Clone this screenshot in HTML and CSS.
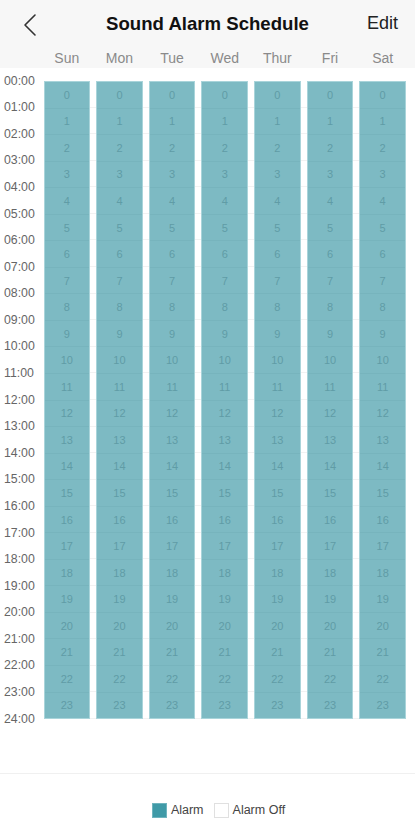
FILE: index.html
```html
<!DOCTYPE html>
<html>
<head>
<meta charset="utf-8">
<link rel="stylesheet" href="styles.css">
</head>
<body>
<div class="page">
  <header class="header">
    <div class="topbar">
      <div class="back">
        <svg width="14" height="24" viewBox="0 0 14 24"><path d="M12 2 L2 12 L12 22" fill="none" stroke="#333" stroke-width="1.6" stroke-linecap="round" stroke-linejoin="round"/></svg>
      </div>
      <div class="title">Sound Alarm Schedule</div>
      <div class="edit">Edit</div>
    </div>
    <div class="days">
      <span>Sun</span><span>Mon</span><span>Tue</span><span>Wed</span><span>Thur</span><span>Fri</span><span>Sat</span>
    </div>
  </header>
  <main class="schedule">
    <div class="times" id="times"></div>
    <div class="grid" id="grid"></div>
  </main>
  <footer class="legend">
    <span class="swatch on"></span><span class="lbl">Alarm</span>
    <span class="swatch off"></span><span class="lbl">Alarm Off</span>
  </footer>
</div>
<script src="app.js"></script>
</body>
</html>
```
FILE: app.js
```js
var times = document.getElementById('times');
for (var h = 0; h <= 24; h++) {
  var d = document.createElement('div');
  d.className = 'time';
  d.textContent = (h < 10 ? '0' + h : h) + ':00';
  times.appendChild(d);
}
var grid = document.getElementById('grid');
for (var c = 0; c < 7; c++) {
  var col = document.createElement('div');
  col.className = 'col';
  for (var r = 0; r < 24; r++) {
    var cell = document.createElement('div');
    cell.className = 'cell';
    cell.textContent = r;
    col.appendChild(cell);
  }
  grid.appendChild(col);
}
```
FILE: styles.css
```css
html, body {
  margin: 0;
  padding: 0;
  background: #fff;
}
body {
  font-family: "Liberation Sans", Arial, sans-serif;
  width: 415px;
  height: 840px;
  overflow: hidden;
}
.page {
  display: flex;
  flex-direction: column;
  height: 840px;
}
.header {
  background: #f7f7f7;
  height: 68px;
  display: flex;
  flex-direction: column;
}
.topbar {
  height: 47px;
  display: flex;
  align-items: center;
}
.back {
  width: 62px;
  padding-left: 23px;
  box-sizing: border-box;
  display: flex;
  align-items: center;
  padding-top: 2px;
}
.title {
  flex: 1;
  text-align: center;
  font-weight: bold;
  font-size: 18.6px;
  color: #111;
}
.edit {
  width: 62px;
  font-size: 18px;
  color: #222;
  padding-left: 14px;
  box-sizing: border-box;
}
.days {
  display: flex;
  gap: 6px;
  padding-left: 43.5px;
  padding-right: 9px;
  height: 21px;
  align-items: center;
}
.days span {
  flex: 1;
  text-align: center;
  font-size: 14px;
  color: #8a8a8a;
}
.schedule {
  display: flex;
  margin-top: 13px;
  height: 638px;
}
.times {
  width: 43.5px;
  margin-top: -13.3px;
  display: flex;
  flex-direction: column;
}
.time {
  height: 26.583px;
  line-height: 26.583px;
  font-size: 12.3px;
  color: #666;
  padding-left: 4px;
  flex-shrink: 0;
}
.grid {
  flex: 1;
  margin-right: 9px;
  display: flex;
  gap: 6px;
  background-image: repeating-linear-gradient(to bottom, transparent 0, transparent 25.583px, #f2f2f2 25.583px, #f2f2f2 26.583px);
}
.col {
  flex: 1;
  background: #7dbac3;
  border: 1px solid #a9d4da;
  box-sizing: border-box;
  display: flex;
  flex-direction: column;
}
.cell {
  flex: 1;
  display: flex;
  align-items: center;
  justify-content: center;
  font-size: 11px;
  color: #609ca6;
  border-bottom: 1px solid #77b4bd;
}
.cell:last-child {
  border-bottom: none;
}
.legend {
  margin-top: 54px;
  border-top: 1px solid #f0f0f0;
  flex: 1;
  display: flex;
  align-items: center;
  justify-content: center;
  padding-top: 6px;
  padding-left: 22px;
}
.swatch {
  width: 15px;
  height: 15px;
  box-sizing: border-box;
  display: inline-block;
}
.swatch.on {
  background: #3f9aa7;
  border: 1px solid #6fb4be;
}
.swatch.off {
  background: #fff;
  border: 1px solid #e0e0e0;
  margin-left: 10px;
}
.lbl {
  font-size: 12.5px;
  color: #444;
  margin-left: 4px;
}
```
